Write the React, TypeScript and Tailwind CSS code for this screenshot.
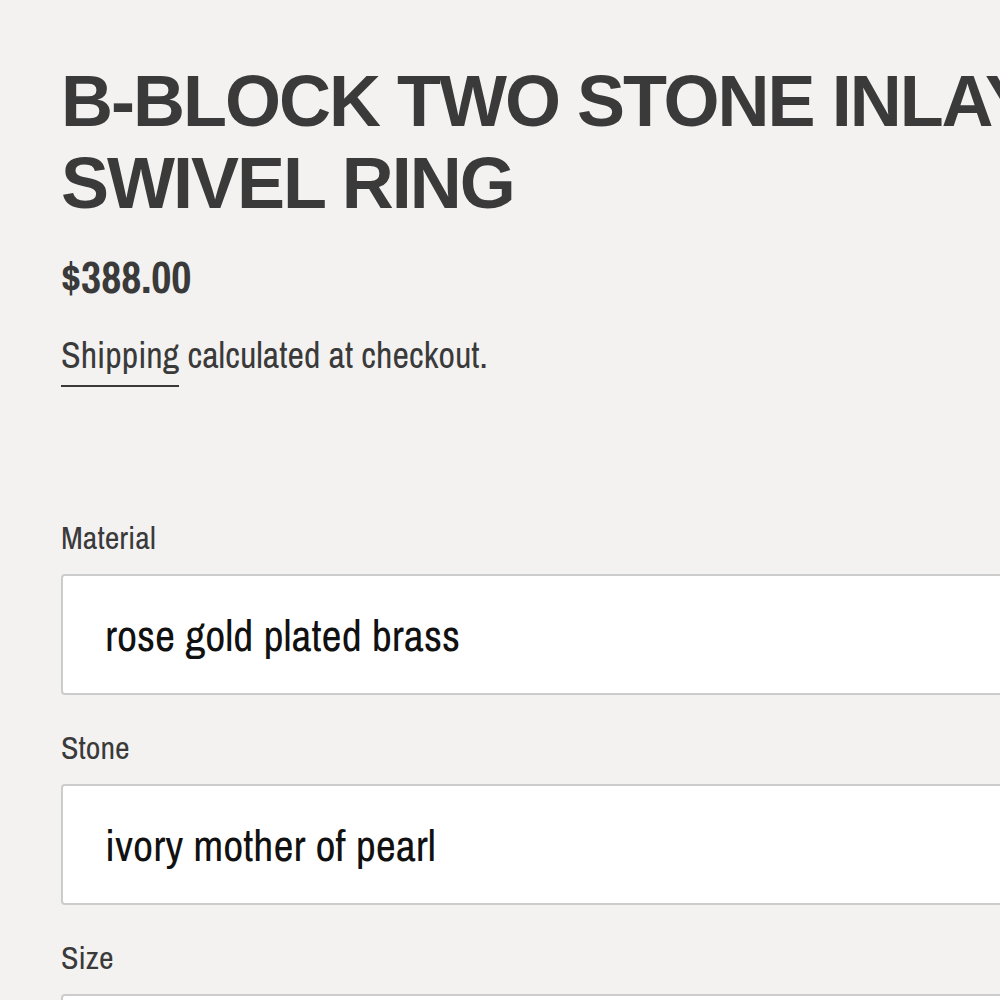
const options = [
  { label: 'Material', value: 'rose gold plated brass' },
  { label: 'Stone', value: 'ivory mother of pearl' },
  { label: 'Size', value: '7' },
];

function OptionSelect({ label, value }: { label: string; value: string }) {
  return (
    <div className="mb-[33px]">
      <div className="text-[32px] leading-[40px] text-[#3a3a3a] mb-[16px]">{label}</div>
      <div className="h-[121px] w-[1300px] rounded-[4px] border-2 border-[#cccccc] bg-white flex items-center pl-[42px] text-[44px] text-[#111111]">
        {value}
      </div>
    </div>
  );
}

export default function App() {
  return (
    <div className="w-[1000px] h-[1000px] overflow-hidden bg-[#f3f2f1] font-['Archivo_Narrow','Roboto_Condensed',sans-serif]">
      <div className="w-[1400px] pl-[61px] pt-[60px]">
        <h1 className="font-['Liberation_Sans',Arial,sans-serif] font-bold text-[72px] leading-[82px] tracking-[-2px] text-[#3a3a3a] uppercase">
          B-Block Two Stone Inlay
          <br />
          Swivel Ring
        </h1>
        <div className="mt-[28px] text-[44px] leading-[50px] font-bold text-[#3a3a3a]">$388.00</div>
        <div className="mt-[31px] text-[36px] leading-[44px] text-[#3a3a3a]">
          <span className="border-b-2 border-[#3a3a3a] pb-[6px]">Shipping</span> calculated at checkout.
        </div>
        <div className="mt-[141px]">
          {options.map((o) => (
            <OptionSelect key={o.label} label={o.label} value={o.value} />
          ))}
        </div>
      </div>
    </div>
  );
}
